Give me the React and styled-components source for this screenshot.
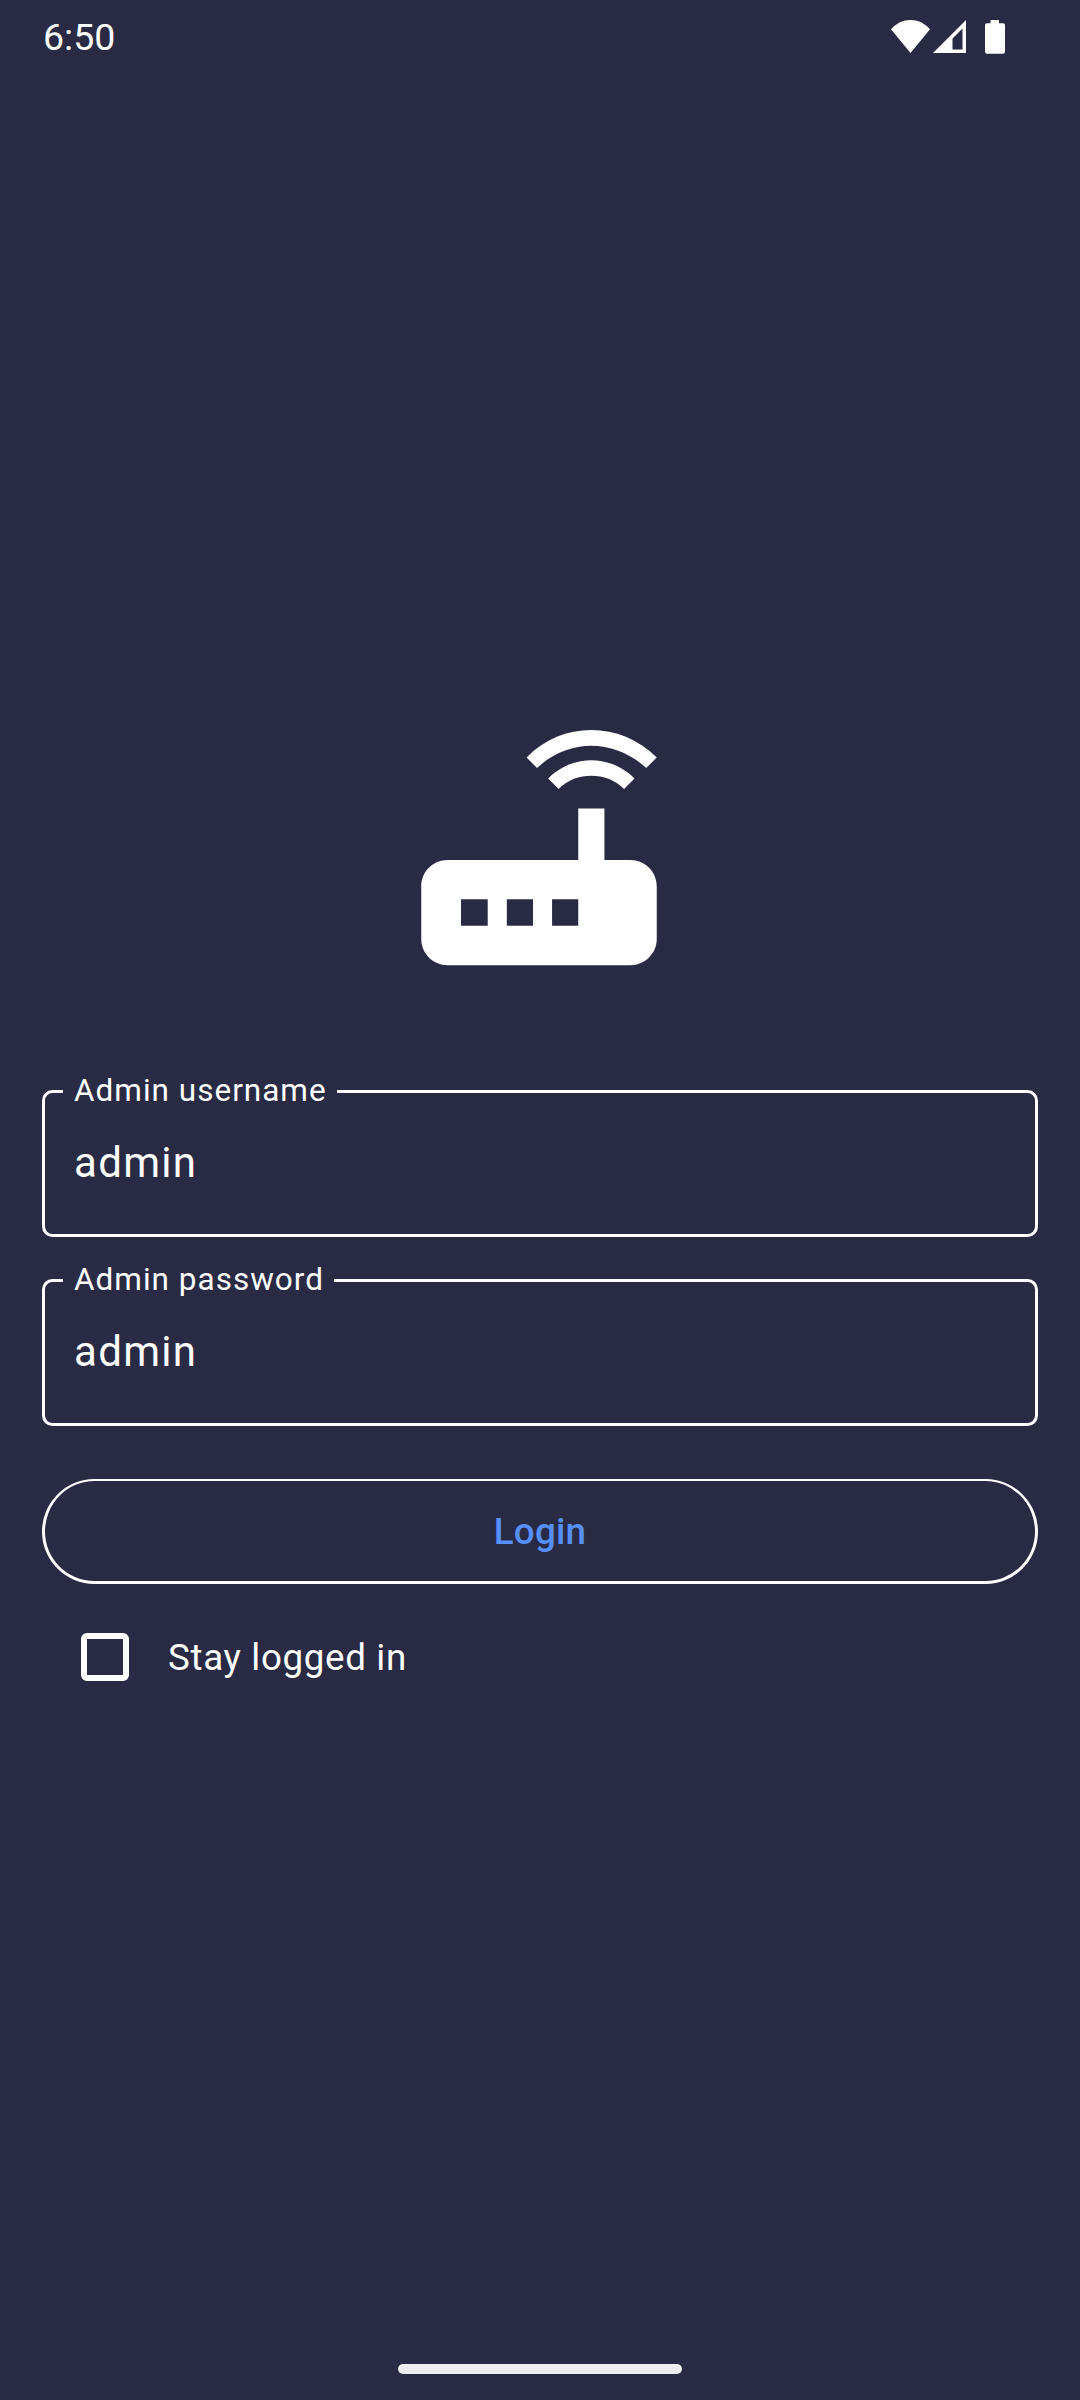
import React, { useState } from 'react';
import styled, { createGlobalStyle } from 'styled-components';

const GlobalStyle = createGlobalStyle`
  body { margin: 0; background: #292a44; }
  *, *::before, *::after { box-sizing: border-box; }
`;

const Screen = styled.div`
  display: flex;
  flex-direction: column;
  width: 1080px;
  height: 2400px;
  overflow: hidden;
  background: #292a44;
  color: #fff;
  font-family: Roboto, "Liberation Sans", sans-serif;
`;

const StatusBar = styled.header`
  display: flex;
  align-items: flex-start;
  justify-content: space-between;
  height: 74px;
  padding: 0 75px 0 43px;
`;

const Clock = styled.span`
  margin-top: 15px;
  font-size: 37.5px;
  line-height: 44px;
`;

const StatusIcons = styled.div`
  display: flex;
  align-items: flex-start;
  margin-top: 20px;
`;

const StatusIcon = styled.svg`
  display: block;
  margin-left: ${({ $gap }) => $gap || 0}px;
`;

const Main = styled.main`
  flex: 1;
  display: flex;
  flex-direction: column;
  padding: 616px 42px 0;
`;

const RouterIcon = styled.svg`
  display: block;
  width: 314px;
  height: 314px;
  margin: 0 auto 0 340px;
  fill: #fff;
`;

const Form = styled.form`
  display: flex;
  flex-direction: column;
  margin-top: 69px;
`;

const Field = styled.fieldset`
  height: 164px;
  min-width: 0;
  margin: 0 0 25px;
  padding: 0 29px;
  border: 3px solid #fff;
  border-radius: 10.5px;
`;

const FieldLabel = styled.legend`
  height: 37px;
  margin-left: -11px;
  padding: 0 10px 0 11px;
  font-size: 31.5px;
  line-height: 35px;
  letter-spacing: 1px;
  white-space: nowrap;
`;

const FieldInput = styled.input`
  display: block;
  width: 100%;
  height: 63px;
  margin-top: 21px;
  padding: 0;
  border: 0;
  outline: 0;
  background: transparent;
  color: #fff;
  font: 400 42px/63px Roboto, "Liberation Sans", sans-serif;
  letter-spacing: 1.3125px;
`;

const LoginButton = styled.button`
  height: 105px;
  margin-top: 28px;
  padding: 2px 0 0;
  border: 3px solid #fff;
  border-top-width: 2px;
  border-radius: 53px;
  background: transparent;
  color: #568ff7;
  font: 500 36.75px/52px Roboto, "Liberation Sans", sans-serif;
  letter-spacing: 0.2625px;
`;

const CheckRow = styled.label`
  display: flex;
  align-items: center;
  height: 126px;
  margin-top: 10px;
  padding-left: 39px;
  gap: 39px;
`;

const CheckText = styled.span`
  padding-top: 2px;
  font-size: 36.75px;
  line-height: 52px;
  letter-spacing: 0.65px;
`;

const Checkbox = styled.input`
  appearance: none;
  width: 48px;
  height: 48px;
  margin: 0;
  border: 6px solid #fff;
  border-radius: 6px;
  background: ${({ checked }) => (checked ? '#fff' : 'transparent')};
`;

const GestureArea = styled.footer`
  display: flex;
  justify-content: center;
  height: 36px;
`;

const GestureHandle = styled.div`
  width: 284px;
  height: 10px;
  border-radius: 5px;
  background: #eeeef0;
`;

function TextField({ label, initial }) {
  const [value, setValue] = useState(initial);
  return (
    <Field>
      <FieldLabel>{label}</FieldLabel>
      <FieldInput aria-label={label} value={value} onChange={(e) => setValue(e.target.value)} />
    </Field>
  );
}

export default function App() {
  const [stay, setStay] = useState(false);
  return (
    <Screen>
      <GlobalStyle />
      <StatusBar>
        <Clock>6:50</Clock>
        <StatusIcons>
          <StatusIcon width="39" height="34" viewBox="0 0 39 34" fill="#fff">
            <path d="M19.5 33 0 9.2C5.5 3.2 12 0 19.5 0S33.5 3.2 39 9.2Z" />
          </StatusIcon>
          <StatusIcon $gap={3} width="33" height="34" viewBox="0 0 33 34" fill="#fff" fillRule="evenodd">
            <path d="M33 0V33H0ZM29.5 8.5 19.5 18.5V29.5H29.5Z" />
          </StatusIcon>
          <StatusIcon $gap={19} width="20" height="34" viewBox="0 0 20 34" fill="#fff">
            <path d="M5.5 0H14V3.3H18Q20 3.3 20 5.3V31.5Q20 33.7 18 33.7H2Q0 33.7 0 31.5V5.3Q0 3.3 2 3.3H5.5Z" />
          </StatusIcon>
        </StatusIcons>
      </StatusBar>
      <Main>
        <RouterIcon viewBox="0 0 24 24">
          <path d="M20.2 5.96l.8-.8C19.6 3.76 17.8 3.06 16 3.06s-3.6.7-4.95 2.1l.8.8C13 4.86 14.5 4.26 16 4.26s3 .6 4.2 1.7zm-.9.8c-.9-.9-2.1-1.4-3.3-1.4s-2.4.5-3.3 1.4l.8.8c.7-.7 1.6-1 2.5-1 .9 0 1.8.3 2.5 1l.8-.8zM19 13h-2V9.05h-2V13H5c-1.1 0-2 .9-2 2v4.04c0 1.1.9 2 2 2h14c1.1 0 2-.9 2-2V15c0-1.1-.9-2-2-2zM8.08 18.02h-2.04v-2.02h2.04zm3.46 0h-2v-2.02h2zm3.46 0h-2v-2.02h2z" />
        </RouterIcon>
        <Form onSubmit={(e) => e.preventDefault()}>
          <TextField label="Admin username" initial="admin" />
          <TextField label="Admin password" initial="admin" />
          <LoginButton type="submit">Login</LoginButton>
          <CheckRow>
            <Checkbox type="checkbox" checked={stay} onChange={(e) => setStay(e.target.checked)} />
            <CheckText>Stay logged in</CheckText>
          </CheckRow>
        </Form>
      </Main>
      <GestureArea>
        <GestureHandle />
      </GestureArea>
    </Screen>
  );
}
